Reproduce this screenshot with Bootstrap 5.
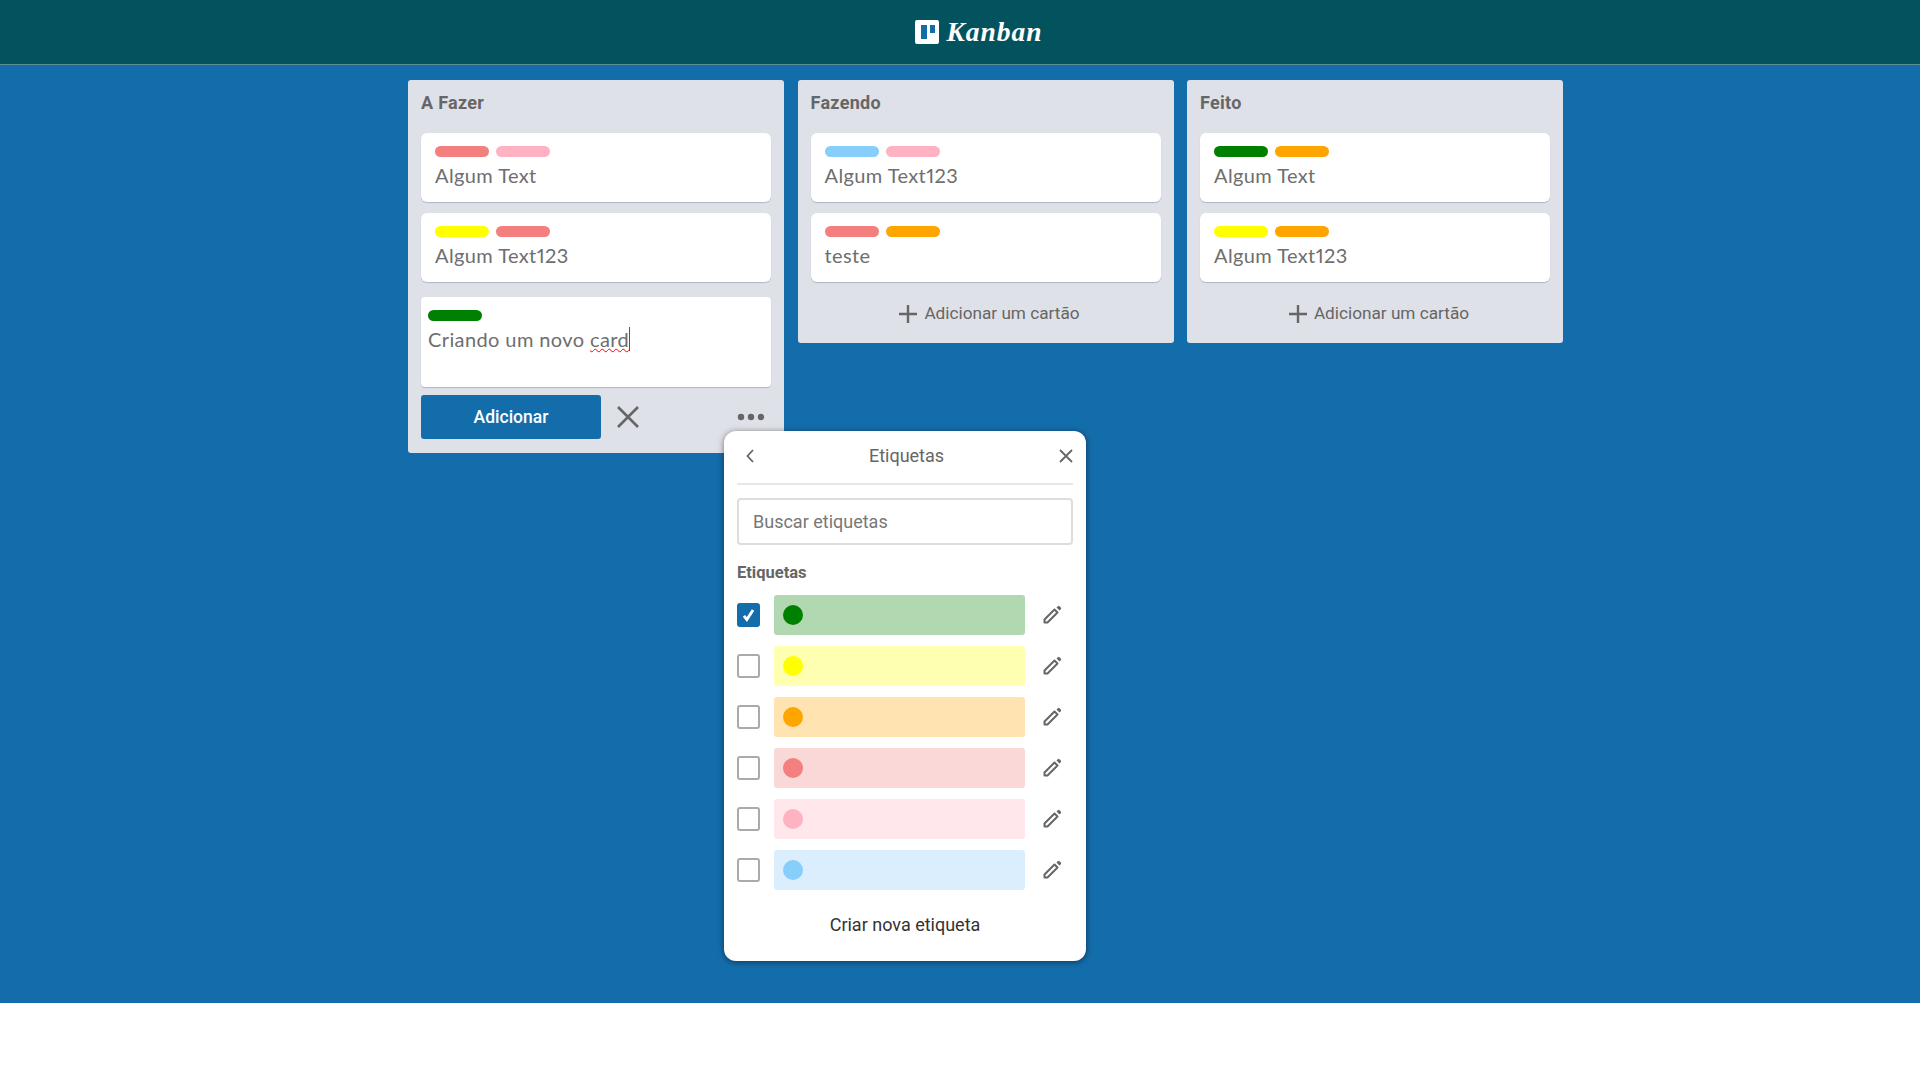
<!DOCTYPE html>
<html lang="pt-BR">
<head>
    <meta charset="utf-8">
    <title>Kanban</title>
    <link href="https://cdn.jsdelivr.net/npm/bootstrap@5.3.0/dist/css/bootstrap.min.css" rel="stylesheet">
    <style>
        body { font-family: Roboto, sans-serif; color: #666; background: #fff; }
        .app-top { height: 65px; background: #03535f; border-bottom: 1px solid #5d8f97; padding-left: 38px; }
        .app-logo { width: 24px; height: 24px; background: #fff; border-radius: 2px; }
        .app-name { font-family: "Liberation Serif", serif; font-style: italic; font-weight: 700; font-size: 27.5px; line-height: 1; color: #fff; margin-left: 7px; letter-spacing: 1px; }
        .board-area { height: 938px; background: #146dab; padding: 15px 0 0 408px; gap: 13.5px; }
        .lane { width: 376px; background: #dfe1e8; border-radius: 3px; padding: 0 13px; }
        .lane-title { font-size: 18px; font-weight: 700; letter-spacing: .3px; line-height: 21px; padding: 12px 0 20px; margin: 0; color: #666; }
        .task { height: 69px; background: #fff; border-radius: 6px; box-shadow: 0 1px 1px #a9b9c9; padding: 13px 13px 0 14px; margin-bottom: 11px; }
        .tag-line { gap: 7px; }
        .tag { width: 54px; height: 11px; border-radius: 6px; }
        .task-text { font-family: Lato, sans-serif; font-size: 20px; font-variant-numeric: proportional-nums; letter-spacing: .4px; line-height: 24px; margin-top: 6px; color: #6e6e6e; }
        .task-new { height: 90px; padding: 13px 6px 0 7px; margin: 15px 0 8px; border-radius: 4px; }
        .typo { text-decoration: underline wavy red 1px; border-right: 1px solid #555; }
        .btn-add { width: 180px; height: 44px; background: #146dab; color: #fff; font-size: 17.5px; font-weight: 500; border: 0; border-radius: 3px; }
        .lane-actions { padding-bottom: 14px; }
        .action-close { margin-left: 15px; }
        .action-more { margin-right: 5px; }
        .add-card { height: 60px; font-size: 17.2px; margin-top: -10px; padding: 2px 0 0 8px; gap: 7px; color: #666; }
        .label-pop { position: absolute; left: 724px; top: 431px; width: 362px; height: 530px; background: #fff; border-radius: 12px; box-shadow: 0 1px 6px rgba(0,0,0,.5); padding: 0 13px; }
        .pop-head { height: 54px; padding-bottom: 2px; border-bottom: 2px solid #e8e8e8; font-size: 18px; }
        .pop-back { margin-left: 9px; }
        .pop-title { margin-top: -2px; }
        .pop-search.form-control { height: 47px; margin-top: 13px; border: 2px solid #ddd; border-radius: 4px; font-size: 18px; padding: 0 14px; color: #666; }
        .pop-search::placeholder { color: #777; }
        .pop-sub { font-size: 16.5px; font-weight: 700; line-height: 20px; margin: 18px 0 12px; color: #666; }
        .pop-row { height: 40px; margin-bottom: 11px; }
        .pop-check.form-check-input { width: 23px; height: 24px; margin: 0 14px 0 0; border: 2px solid #aaa; border-radius: 3px; flex: none; }
        .pop-check.form-check-input:checked { background-color: #146dab; border-color: #146dab; background-size: 100% 100%; background-image: url("data:image/svg+xml,%3csvg xmlns='http://www.w3.org/2000/svg' viewBox='0 0 23 24'%3e%3cpath fill='none' stroke='%23fff' stroke-width='3.5' d='M6 13l3.5 4.5L17 6'/%3e%3c/svg%3e"); }
        .color-bar { width: 251px; height: 40px; border-radius: 3px; padding-left: 9px; flex: none; }
        .color-dot { width: 20px; height: 20px; border-radius: 50%; }
        .pop-edit { margin-left: 17px; }
        .pop-create { font-size: 18px; color: #333; margin-top: 23px; line-height: 24px; }
        .c-green { background: #008000; } .c-green-soft { background: #b2d8b2; }
        .c-yellow { background: #ffff00; } .c-yellow-soft { background: #ffffb2; }
        .c-orange { background: #ffa500; } .c-orange-soft { background: #ffe4b2; }
        .c-red { background: #f47f7f; } .c-red-soft { background: #fbd8d8; }
        .c-pink { background: #ffb2c1; } .c-pink-soft { background: #ffe7ec; }
        .c-blue { background: #87cefa; } .c-blue-soft { background: #dbeefd; }
    </style>
</head>
<body>
    <svg width="0" height="0" class="position-absolute">
        <symbol id="ic-pen" viewBox="0 0 20 20">
            <path d="M2.5 14.5 12.5 4.5l3 3-10 10H2.5z" fill="none" stroke="#666" stroke-width="2" stroke-linejoin="round"/>
            <path d="M14.5 2.5 15.8 1.2a1.2 1.2 0 0 1 1.7 0l1.3 1.3a1.2 1.2 0 0 1 0 1.7L17.5 5.5z" fill="#666"/>
        </symbol>
        <symbol id="ic-plus" viewBox="0 0 18 18">
            <path d="M9 0v18M0 9h18" stroke="#666" stroke-width="2.4" fill="none"/>
        </symbol>
    </svg>

    <header class="app-top d-flex align-items-center justify-content-center">
        <div class="d-flex align-items-center">
            <svg class="app-logo" viewBox="0 0 24 24"><rect x="6" y="5" width="6" height="14" fill="#146dab"/><rect x="15" y="5" width="5" height="8" fill="#146dab"/></svg>
            <span class="app-name">Kanban</span>
        </div>
    </header>

    <main class="board-area d-flex align-items-start position-relative">
        <section class="lane">
            <h2 class="lane-title">A Fazer</h2>
            <div class="task">
                <div class="tag-line d-flex"><span class="tag c-red"></span><span class="tag c-pink"></span></div>
                <div class="task-text">Algum Text</div>
            </div>
            <div class="task">
                <div class="tag-line d-flex"><span class="tag c-yellow"></span><span class="tag c-red"></span></div>
                <div class="task-text">Algum Text123</div>
            </div>
            <div class="task task-new">
                <div class="tag-line d-flex"><span class="tag c-green"></span></div>
                <div class="task-text">Criando um novo <span class="typo">card</span></div>
            </div>
            <div class="lane-actions d-flex align-items-center">
                <button class="btn btn-add" type="button">Adicionar</button>
                <svg class="action-close" width="24" height="24" viewBox="0 0 24 24"><path d="M2 2 22 22M22 2 2 22" stroke="#666" stroke-width="2.6" fill="none"/></svg>
                <svg class="action-more ms-auto" width="30" height="8" viewBox="0 0 30 8"><circle cx="5" cy="4" r="3.2" fill="#666"/><circle cx="15" cy="4" r="3.2" fill="#666"/><circle cx="25" cy="4" r="3.2" fill="#666"/></svg>
            </div>
        </section>

        <section class="lane">
            <h2 class="lane-title">Fazendo</h2>
            <div class="task">
                <div class="tag-line d-flex"><span class="tag c-blue"></span><span class="tag c-pink"></span></div>
                <div class="task-text">Algum Text123</div>
            </div>
            <div class="task">
                <div class="tag-line d-flex"><span class="tag c-red"></span><span class="tag c-orange"></span></div>
                <div class="task-text">teste</div>
            </div>
            <div class="add-card d-flex align-items-center justify-content-center">
                <svg width="18" height="18"><use href="#ic-plus"/></svg>
                <span>Adicionar um cartão</span>
            </div>
        </section>

        <section class="lane">
            <h2 class="lane-title">Feito</h2>
            <div class="task">
                <div class="tag-line d-flex"><span class="tag c-green"></span><span class="tag c-orange"></span></div>
                <div class="task-text">Algum Text</div>
            </div>
            <div class="task">
                <div class="tag-line d-flex"><span class="tag c-yellow"></span><span class="tag c-orange"></span></div>
                <div class="task-text">Algum Text123</div>
            </div>
            <div class="add-card d-flex align-items-center justify-content-center">
                <svg width="18" height="18"><use href="#ic-plus"/></svg>
                <span>Adicionar um cartão</span>
            </div>
        </section>
    </main>

    <div class="label-pop">
        <div class="pop-head d-flex align-items-center justify-content-between">
            <svg class="pop-back" width="8" height="14" viewBox="0 0 8 14"><path d="M7 1 1.5 7 7 13" stroke="#666" stroke-width="1.8" fill="none"/></svg>
            <span class="pop-title">Etiquetas</span>
            <svg width="14" height="14" viewBox="0 0 14 14"><path d="M1 1 13 13M13 1 1 13" stroke="#666" stroke-width="1.8" fill="none"/></svg>
        </div>
        <input class="form-control pop-search" type="text" placeholder="Buscar etiquetas">
        <div class="pop-sub">Etiquetas</div>
        <div class="pop-row d-flex align-items-center">
            <input class="form-check-input pop-check" type="checkbox" checked>
            <div class="color-bar c-green-soft d-flex align-items-center"><span class="color-dot c-green"></span></div>
            <svg class="pop-edit" width="20" height="20"><use href="#ic-pen"/></svg>
        </div>
        <div class="pop-row d-flex align-items-center">
            <input class="form-check-input pop-check" type="checkbox">
            <div class="color-bar c-yellow-soft d-flex align-items-center"><span class="color-dot c-yellow"></span></div>
            <svg class="pop-edit" width="20" height="20"><use href="#ic-pen"/></svg>
        </div>
        <div class="pop-row d-flex align-items-center">
            <input class="form-check-input pop-check" type="checkbox">
            <div class="color-bar c-orange-soft d-flex align-items-center"><span class="color-dot c-orange"></span></div>
            <svg class="pop-edit" width="20" height="20"><use href="#ic-pen"/></svg>
        </div>
        <div class="pop-row d-flex align-items-center">
            <input class="form-check-input pop-check" type="checkbox">
            <div class="color-bar c-red-soft d-flex align-items-center"><span class="color-dot c-red"></span></div>
            <svg class="pop-edit" width="20" height="20"><use href="#ic-pen"/></svg>
        </div>
        <div class="pop-row d-flex align-items-center">
            <input class="form-check-input pop-check" type="checkbox">
            <div class="color-bar c-pink-soft d-flex align-items-center"><span class="color-dot c-pink"></span></div>
            <svg class="pop-edit" width="20" height="20"><use href="#ic-pen"/></svg>
        </div>
        <div class="pop-row d-flex align-items-center">
            <input class="form-check-input pop-check" type="checkbox">
            <div class="color-bar c-blue-soft d-flex align-items-center"><span class="color-dot c-blue"></span></div>
            <svg class="pop-edit" width="20" height="20"><use href="#ic-pen"/></svg>
        </div>
        <div class="pop-create text-center">Criar nova etiqueta</div>
    </div>

    <script src="https://cdn.jsdelivr.net/npm/bootstrap@5.3.0/dist/js/bootstrap.bundle.min.js"></script>
</body>
</html>
